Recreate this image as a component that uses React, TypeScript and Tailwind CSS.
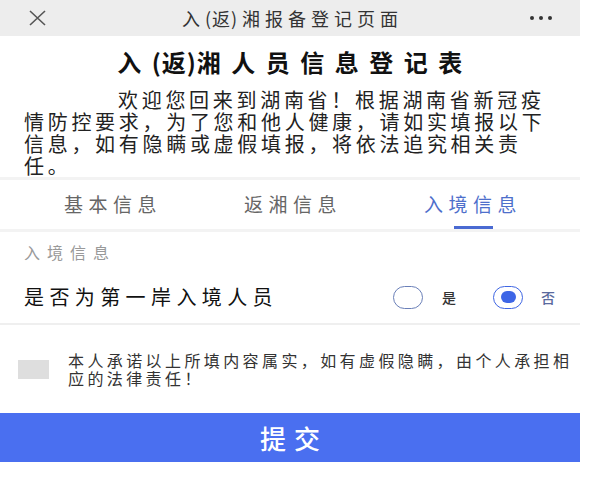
import React from "react";

export default function App() {
  return (
    <div className="w-[592px] h-[483px] bg-white overflow-hidden font-['Noto_Sans_CJK_SC','Noto_Sans',sans-serif]">
      <div className="w-[580px]">
        {/* Header */}
        <div className="h-[36px] bg-[#ededed] flex items-center">
          <div className="w-[110px] pl-[28px] flex items-center">
            <svg width="19" height="16" viewBox="0 0 19 16">
              <path d="M2 1 L17 15 M17 1 L2 15" stroke="#555" strokeWidth="1.6" fill="none" />
            </svg>
          </div>
          <div className="flex-1 text-center text-[18px] tracking-[5px] text-[#333] pl-[5px]">
            入<span className="tracking-[1px]">(返</span>)湘报备登记页面
          </div>
          <div className="w-[110px] flex justify-end pr-[28px] gap-[5px]">
            <span className="w-[4px] h-[4px] rounded-full bg-[#333]" />
            <span className="w-[4px] h-[4px] rounded-full bg-[#333]" />
            <span className="w-[4px] h-[4px] rounded-full bg-[#333]" />
          </div>
        </div>

        {/* Title */}
        <h1 className="mt-[11px] text-center text-[24px] leading-[30px] font-bold tracking-[10.5px] text-[#111] pl-[10px]">
          入<span className="tracking-[1px]">(返)</span>湘人员信息登记表
        </h1>

        {/* Intro paragraph */}
        <p className="mt-[12px] px-[24px] indent-[94px] text-[20px] leading-[22px] tracking-[3.7px] text-[#222]">
          欢迎您回来到湖南省！根据湖南省新冠疫情防控要求，为了您和他人健康，请如实填报以下信息，如有隐瞒或虚假填报，将依法追究相关责任。
        </p>

        <div className="h-[3px] bg-[#f3f3f3]" />

        {/* Tabs */}
        <div className="grid grid-cols-3 px-[20px] h-[49px]">
          <div className="flex flex-col items-center justify-end">
            <span className="text-[19px] leading-[24px] tracking-[5.5px] text-[#666] pl-[6px]">基本信息</span>
            <span className="h-[3px] mt-[10px]" />
          </div>
          <div className="flex flex-col items-center justify-end">
            <span className="text-[19px] leading-[24px] tracking-[5.5px] text-[#666] pl-[6px]">返湘信息</span>
            <span className="h-[3px] mt-[10px]" />
          </div>
          <div className="flex flex-col items-center justify-end">
            <span className="text-[19px] leading-[24px] tracking-[5.5px] text-[#4e6fcb] pl-[6px]">入境信息</span>
            <span className="h-[3px] w-[39px] mt-[10px] bg-[#4a6ad2] ml-[6px]" />
          </div>
        </div>

        <div className="h-[3px] bg-[#f3f3f3]" />

        {/* Section label */}
        <div className="pt-[11px] pb-[10px] pl-[24px] text-[16px] leading-[18px] tracking-[7px] text-[#999]">
          入境信息
        </div>

        {/* Radio row */}
        <div className="h-[54px] flex items-center pl-[24px] pr-[25px] border-b-2 border-[#efefef]">
          <span className="text-[20px] tracking-[5.4px] text-[#111] flex-1">是否为第一岸入境人员</span>
          <span className="w-[30px] h-[23px] rounded-full border-[1.5px] border-[#6a7fb8]" />
          <span className="ml-[19px] text-[14px] text-[#333] font-medium">是</span>
          <span className="ml-[37px] w-[30px] h-[23px] rounded-full border-[1.5px] border-[#3f66e3] flex items-center justify-center">
            <span className="w-[15px] h-[12px] rounded-full bg-[#3e66e6]" />
          </span>
          <span className="ml-[18px] text-[14px] text-[#5a6a9e] font-medium">否</span>
        </div>

        {/* Agreement */}
        <div className="h-[88px] flex items-center">
          <span className="ml-[18px] w-[31px] h-[19px] bg-[#dedede] shrink-0" />
          <p className="ml-[19px] text-[16px] leading-[18px] tracking-[3.4px] text-[#333]">
            本人承诺以上所填内容属实，如有虚假隐瞒，由个人承担相应的法律责任！
          </p>
        </div>

        {/* Submit */}
        <button className="w-full h-[49px] bg-[#4a6ff0] text-white text-[26px] font-medium tracking-[8px] pl-[8px] flex items-center justify-center">
          提交
        </button>
      </div>
    </div>
  );
}
